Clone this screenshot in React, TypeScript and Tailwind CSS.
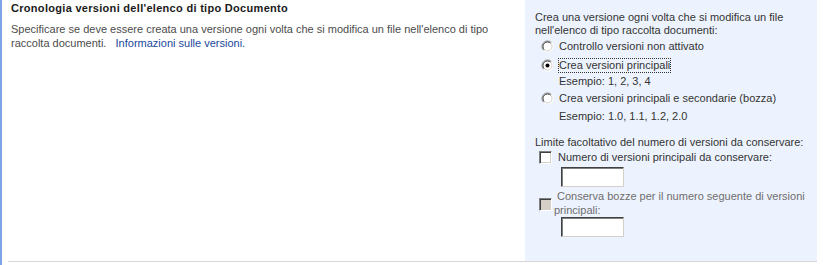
import React from "react";

const Radio = ({ checked }: { checked?: boolean }) => (
  <svg width="13" height="13" viewBox="0 0 13 13" className="shrink-0">
    <circle cx="6.5" cy="6.5" r="5.5" fill="#ffffff" />
    <path d="M10.4 2.6 A5.5 5.5 0 0 0 2.6 10.4" fill="none" stroke="#808080" strokeWidth="1" />
    <path d="M9.7 3.3 A4.5 4.5 0 0 0 3.3 9.7" fill="none" stroke="#404040" strokeWidth="1" />
    <path d="M2.6 10.4 A5.5 5.5 0 0 0 10.4 2.6" fill="none" stroke="#ffffff" strokeWidth="1" />
    <path d="M3.3 9.7 A4.5 4.5 0 0 0 9.7 3.3" fill="none" stroke="#d4d0c8" strokeWidth="1" />
    {checked && <circle cx="6.5" cy="6.5" r="2" fill="#000000" />}
  </svg>
);

const Check = ({ disabled }: { disabled?: boolean }) => (
  <span
    className={`block w-[13px] h-[13px] shrink-0 border border-t-[#808080] border-l-[#808080] border-b-white border-r-white shadow-[inset_1px_1px_0_#404040,inset_-1px_-1px_0_#d4d0c8] ${
      disabled ? "bg-[#d4d0c8]" : "bg-white"
    }`}
  />
);

const Field = () => (
  <input
    type="text"
    className="block w-[63px] h-[20px] bg-white border border-t-[#404040] border-l-[#404040] border-b-[#d4d0c8] border-r-[#d4d0c8] shadow-[inset_1px_1px_0_#808080] outline-none"
  />
);

export default function App() {
  return (
    <div
      className="w-[836px] h-[265px] bg-white border-l-2 border-[#7da2e8] text-[11px]"
      style={{ fontFamily: '"Liberation Sans", Arial, sans-serif' }}
    >
      <div className="ml-[6px] mr-[19px] h-[262px] flex border-b border-[#d6d6d6]">
        {/* descrizione sezione */}
        <div className="flex-1 pl-[3px] pt-[1px] leading-[14px]">
          <h3 className="font-bold text-[#1a1a1a] tracking-[0.3px]">Cronologia versioni dell'elenco di tipo Documento</h3>
          <p className="mt-[7px] text-[#4c4c4c] pr-[30px]">
            Specificare se deve essere creata una versione ogni volta che si modifica un file nell'elenco di tipo
            raccolta documenti.&nbsp;&nbsp;&nbsp;
            <a href="#" className="text-[#21489b]">Informazioni sulle versioni.</a>
          </p>
        </div>

        {/* controlli */}
        <div className="w-[292px] bg-[#edf3fe] pl-[10px] pt-[11px] text-[#333333]">
          <div className="leading-[13px]">
            Crea una versione ogni volta che si modifica un file
            <br />
            nell'elenco di tipo raccolta documenti:
          </div>
          <div className="h-[18px] flex items-center pl-[6px] gap-[5px]">
            <Radio />
            <span>Controllo versioni non attivato</span>
          </div>
          <div className="h-[20px] flex items-center pl-[6px] gap-[5px]">
            <Radio checked />
            <span className="outline-1 outline-dotted outline-[#333] leading-[13px]">Crea versioni principali</span>
          </div>
          <div className="h-[12px] leading-[12px] pl-[24px]">Esempio: 1, 2, 3, 4</div>
          <div className="h-[22px] flex items-center pl-[6px] gap-[5px]">
            <Radio />
            <span>Crea versioni principali e secondarie (bozza)</span>
          </div>
          <div className="h-[14px] leading-[14px] pl-[24px]">Esempio: 1.0, 1.1, 1.2, 2.0</div>

          <div className="mt-[12px] leading-[14px]">Limite facoltativo del numero di versioni da conservare:</div>
          <div className="h-[16px] flex items-center pl-[4px] gap-[6px]">
            <Check />
            <span>Numero di versioni principali da conservare:</span>
          </div>
          <div className="mt-[2px] pl-[26px]">
            <Field />
          </div>
          <div className="mt-[2px] flex items-center pl-[4px] gap-[2px]">
            <span className="mt-[3px]">
              <Check disabled />
            </span>
            <span className="leading-[14px] text-[#6d6d6d]">
              &nbsp;Conserva bozze per il numero seguente di versioni principali:
            </span>
          </div>
          <div className="pl-[26px]">
            <Field />
          </div>
        </div>
      </div>
    </div>
  );
}
